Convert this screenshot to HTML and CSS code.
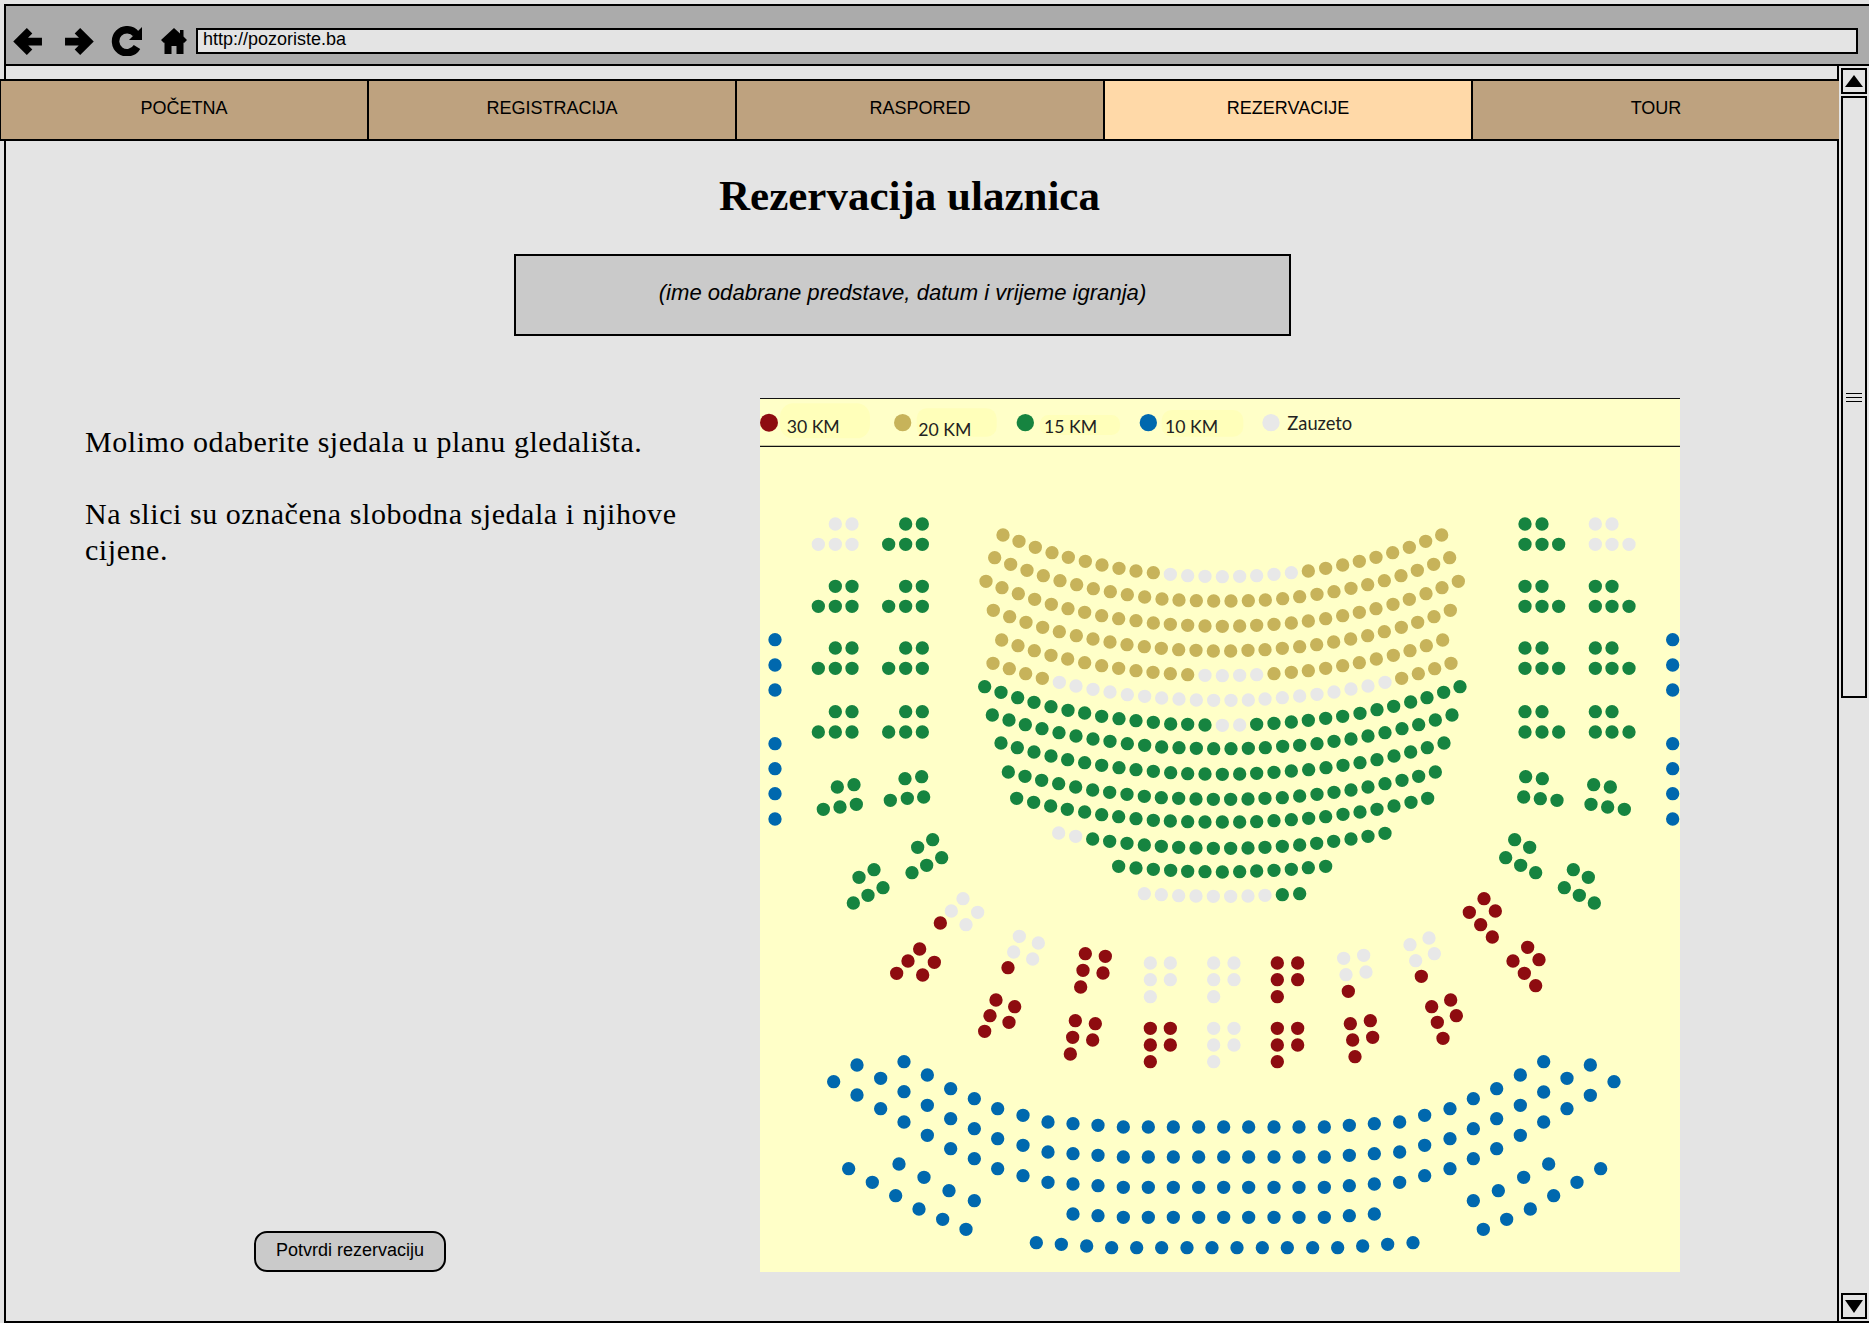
FILE: index.html
```html
<!DOCTYPE html>
<html lang="bs">
<head>
    <meta charset="UTF-8">
    <meta name="viewport" content="width=device-width, initial-scale=1.0">
    <title>Rezervacija ulaznica</title>
    <link rel="stylesheet" href="styles.css">
</head>
<body>
    <div class="window">
        <div class="toolbar">
            <svg class="tool-icon icon-back" viewBox="0 0 30 30"><path d="M29 15H7M17 4.500 6.500 15 17 25.500"/></svg>
            <svg class="tool-icon icon-forward" viewBox="0 0 30 30"><path d="M1 15H23M13 4.500 23.500 15 13 25.500"/></svg>
            <svg class="tool-icon icon-reload" viewBox="0 0 32 30"><path d="M26 21A11.500 11.500 0 1 1 25 8"/><polygon class="solid" points="31,1 31,14 18,14"/></svg>
            <svg class="tool-icon icon-home" viewBox="0 0 26 26"><polygon class="solid" points="13,0 19,5.500 19,2 22.500,2 22.500,8.500 26,12 23,15 22.500,14.500 22.500,26 15.500,26 15.500,18 10.500,18 10.500,26 3.500,26 3.500,14.500 3,15 0,12"/></svg>
            <div class="address">http://pozoriste.ba</div>
        </div>

        <div class="viewport">
            <div class="page">
                <div class="nav">
                    <div class="nav-item">POČETNA</div>
                    <div class="nav-item">REGISTRACIJA</div>
                    <div class="nav-item">RASPORED</div>
                    <div class="nav-item active">REZERVACIJE</div>
                    <div class="nav-item">TOUR</div>
                </div>

                <h1>Rezervacija ulaznica</h1>
                <div class="show-box">(ime odabrane predstave, datum i vrijeme igranja)</div>

                <div class="booking">
                    <div class="intro">
                        <div class="intro-text">
                            <p>Molimo odaberite sjedala u planu gledališta.</p>
                            <p>Na slici su označena slobodna sjedala i njihove cijene.</p>
                        </div>
                        <button class="confirm">Potvrdi rezervaciju</button>
                    </div>

                    <svg class="seat-map" viewBox="30 24 2760 2622">
                        <g class="legend">
                            <rect class="patch" x="90" y="40" width="270" height="105" rx="40"/>
                            <rect class="patch" x="500" y="55" width="240" height="85" rx="30"/>
                            <rect class="patch" x="870" y="75" width="240" height="60" rx="25"/>
                            <rect class="patch" x="1235" y="60" width="245" height="80" rx="30"/>
                            <line x1="30" y1="25" x2="2790" y2="25"/>
                            <line x1="30" y1="169" x2="2790" y2="169"/>
                            <circle class="dot-red" cx="57" cy="98" r="27"/>
                            <circle class="dot-gold" cx="458" cy="98" r="26"/>
                            <circle class="dot-green" cx="826" cy="98" r="26"/>
                            <circle class="dot-blue" cx="1195" cy="98" r="26"/>
                            <circle class="dot-taken" cx="1563" cy="98" r="26"/>
                            <text x="110" y="130">30 KM</text>
                            <text x="505" y="137">20 KM</text>
                            <text x="882" y="128">15 KM</text>
                            <text x="1245" y="130">10 KM</text>
                            <text class="taken-label" x="1612" y="120">Zauzeto</text>
                        </g>

                        <path class="seats gold" d="
                            M759 435h0M807 454h0M856 472h0M906 488h0M955 502h0M1006 514h0M1056 525h0M1107 535h0M1158 543h0M1210 548h0
                            M1675 543h0M1727 535h0M1778 525h0M1828 514h0M1878 502h0M1928 488h0M1978 472h0M2027 454h0M2075 435h0
                            M734 503h0M782 523h0M831 541h0M880 557h0M930 572h0M980 584h0M1030 596h0M1081 605h0M1132 614h0M1184 621h0M1236 627h0M1287 630h0M1339 632h0M1391 633h0M1443 633h0M1495 632h0M1546 630h0M1598 626h0M1649 620h0M1701 613h0M1752 605h0M1803 595h0M1853 584h0M1903 572h0M1953 557h0M2002 541h0M2051 523h0M2099 503h0
                            M708 574h0M756 593h0M805 611h0M854 628h0M904 643h0M954 656h0M1004 667h0M1055 677h0M1106 686h0M1158 692h0M1210 699h0M1261 703h0M1313 706h0M1365 708h0M1417 709h0M1469 708h0M1520 706h0M1572 703h0M1624 699h0M1675 693h0M1727 686h0M1778 677h0M1828 667h0M1878 656h0M1929 643h0M1978 628h0M2028 611h0M2076 593h0M2125 574h0
                            M730 661h0M779 680h0M828 697h0M878 712h0M928 725h0M979 737h0M1029 747h0M1080 756h0M1131 764h0M1183 770h0M1234 775h0M1286 779h0M1338 781h0M1390 783h0M1442 783h0M1494 781h0M1545 779h0M1597 775h0M1649 770h0M1700 764h0M1751 756h0M1802 747h0M1853 737h0M1903 725h0M1954 712h0M2003 697h0M2052 680h0M2101 661h0
                            M755 750h0M804 767h0M853 782h0M903 796h0M953 807h0M1004 818h0M1055 827h0M1106 835h0M1158 842h0M1209 847h0M1261 851h0M1313 854h0
                            M1572 851h0M1624 847h0M1675 842h0M1727 835h0M1778 827h0M1828 818h0M1879 807h0M1930 796h0M1980 782h0M2029 767h0M2078 750h0
                            M729 820h0M778 836h0M827 851h0M877 865h0M1955 865h0M2005 851h0M2054 836h0M2103 820h0"/>

                        <path class="seats green" d="
                            M704 890h0M753 907h0M803 923h0M852 937h0M903 950h0M954 961h0M1004 969h0M1055 979h0M1107 986h0M1158 992h0M1210 997h0M1262 1002h0M1313 1003h0M1365 1005h0
                            M1520 1003h0M1572 1000h0M1624 996h0M1675 991h0M1727 985h0M1778 979h0M1830 970h0M1881 959h0M1931 949h0M1982 936h0M2031 923h0M2081 907h0M2130 890h0
                            M727 975h0M777 990h0M826 1004h0M876 1016h0M927 1028h0M978 1038h0M1029 1047h0M1080 1054h0M1132 1061h0M1184 1066h0M1235 1071h0M1287 1073h0M1339 1075h0M1391 1076h0M1443 1076h0M1495 1075h0M1546 1073h0M1598 1069h0M1649 1066h0M1701 1061h0M1752 1054h0M1803 1047h0M1854 1038h0M1905 1028h0M1956 1016h0M2006 1004h0M2056 990h0M2106 975h0
                            M753 1059h0M802 1073h0M852 1086h0M903 1098h0M953 1109h0M1004 1118h0M1055 1126h0M1107 1133h0M1158 1139h0M1210 1144h0M1262 1148h0M1313 1151h0M1365 1152h0M1417 1153h0M1469 1152h0M1520 1150h0M1572 1147h0M1624 1143h0M1676 1139h0M1728 1133h0M1779 1126h0M1830 1118h0M1881 1109h0M1932 1098h0M1982 1086h0M2032 1073h0M2082 1059h0
                            M775 1146h0M825 1159h0M875 1171h0M926 1181h0M977 1191h0M1028 1200h0M1079 1207h0M1131 1213h0M1183 1219h0M1234 1223h0M1286 1225h0M1338 1227h0M1390 1228h0M1442 1228h0M1494 1227h0M1545 1225h0M1597 1223h0M1649 1218h0M1701 1213h0M1752 1207h0M1803 1200h0M1854 1191h0M1905 1181h0M1956 1171h0M2006 1159h0M2056 1146h0
                            M800 1225h0M851 1237h0M902 1248h0M952 1258h0M1004 1266h0M1055 1274h0M1106 1280h0M1158 1286h0M1210 1291h0M1261 1293h0M1313 1295h0M1365 1296h0M1417 1296h0M1469 1296h0M1520 1295h0M1572 1292h0M1624 1289h0M1676 1285h0M1727 1280h0M1779 1273h0M1830 1266h0M1881 1258h0M1932 1248h0M1983 1237h0M2033 1225h0
                            M1028 1347h0M1079 1354h0M1131 1360h0M1183 1365h0M1234 1369h0M1286 1372h0M1338 1374h0M1390 1375h0M1442 1375h0M1494 1374h0M1545 1372h0M1597 1369h0M1649 1365h0M1700 1360h0M1751 1354h0M1803 1347h0M1854 1339h0M1905 1330h0
                            M1106 1429h0M1158 1434h0M1210 1438h0M1262 1441h0M1313 1444h0M1365 1445h0M1417 1446h0M1469 1445h0M1520 1443h0M1572 1441h0M1624 1438h0M1675 1433h0M1727 1429h0
                            M1597 1514h0M1649 1511h0
                            M467 402h0M517 402h0M416 463h0M467 463h0M517 463h0
                            M256 589h0M306 589h0M205 649h0M256 649h0M306 649h0M467 589h0M517 589h0M416 649h0M467 649h0M517 649h0
                            M256 774h0M306 774h0M205 835h0M256 835h0M306 835h0M467 774h0M517 774h0M416 835h0M467 835h0M517 835h0
                            M256 965h0M306 965h0M205 1026h0M256 1026h0M306 1026h0M467 965h0M517 965h0M416 1026h0M467 1026h0M517 1026h0
                            M262 1191h0M312 1184h0M220 1258h0M270 1251h0M319 1243h0M465 1166h0M515 1160h0M421 1231h0M472 1225h0M521 1221h0
                            M2325 402h0M2376 402h0M2325 463h0M2376 463h0M2426 463h0
                            M2325 589h0M2376 589h0M2325 649h0M2376 649h0M2426 649h0M2536 589h0M2586 589h0M2536 649h0M2586 649h0M2637 649h0
                            M2325 774h0M2376 774h0M2325 835h0M2376 835h0M2426 835h0M2536 774h0M2586 774h0M2536 835h0M2586 835h0M2637 835h0
                            M2325 965h0M2376 965h0M2325 1026h0M2376 1026h0M2426 1026h0M2536 965h0M2586 965h0M2536 1026h0M2586 1026h0M2637 1026h0
                            M2327 1160h0M2377 1166h0M2321 1221h0M2371 1226h0M2421 1231h0M2531 1184h0M2581 1191h0M2523 1243h0M2573 1251h0M2623 1258h0
                            M548 1349h0M503 1372h0M575 1403h0M530 1426h0M486 1448h0M372 1439h0M327 1462h0M399 1493h0M354 1516h0M310 1539h0
                            M2294 1349h0M2339 1372h0M2267 1403h0M2312 1426h0M2357 1448h0M2470 1439h0M2515 1462h0M2443 1493h0M2488 1516h0M2533 1539h0"/>

                        <path class="seats taken" d="
                            M1261 553h0M1313 557h0M1365 559h0M1417 560h0M1469 559h0M1520 557h0M1572 553h0M1624 548h0
                            M1365 856h0M1417 857h0M1469 856h0M1520 854h0
                            M928 877h0M978 888h0M1029 898h0M1080 906h0M1132 914h0M1184 919h0M1235 924h0M1287 927h0M1339 930h0M1391 931h0M1443 931h0M1495 930h0M1545 927h0M1597 923h0M1649 918h0M1701 913h0M1752 906h0M1803 897h0M1854 888h0M1905 877h0
                            M1417 1006h0M1469 1005h0
                            M926 1329h0M977 1339h0
                            M1183 1511h0M1234 1514h0M1286 1517h0M1338 1518h0M1390 1519h0M1442 1519h0M1494 1518h0M1545 1516h0
                            M256 402h0M306 402h0M205 463h0M256 463h0M306 463h0
                            M2536 402h0M2586 402h0M2536 463h0M2586 463h0M2637 463h0
                            M639 1526h0M604 1563h0M683 1567h0M648 1604h0
                            M808 1639h0M865 1659h0M791 1686h0M848 1707h0
                            M1201 1719h0M1261 1719h0M1201 1769h0M1261 1769h0M1201 1820h0
                            M1391 1719h0M1452 1719h0M1391 1769h0M1452 1769h0M1391 1820h0
                            M1391 1915h0M1452 1915h0M1391 1965h0M1452 1965h0M1391 2015h0
                            M1781 1705h0M1841 1696h0M1788 1754h0M1848 1746h0
                            M1980 1664h0M2037 1644h0M1997 1712h0M2053 1691h0"/>

                        <path class="seats red" d="
                            M571 1599h0
                            M509 1677h0M474 1713h0M553 1717h0M518 1755h0M440 1750h0
                            M774 1733h0
                            M738 1830h0M794 1850h0M720 1877h0M777 1897h0M704 1924h0
                            M1006 1691h0M1066 1699h0M999 1741h0M1059 1749h0M992 1791h0
                            M976 1892h0M1036 1901h0M968 1942h0M1028 1950h0M961 1992h0
                            M1201 1915h0M1261 1915h0M1201 1965h0M1261 1965h0M1201 2015h0
                            M1582 1719h0M1643 1719h0M1582 1769h0M1643 1769h0M1582 1820h0
                            M1582 1915h0M1643 1915h0M1582 1965h0M1643 1965h0M1582 2015h0
                            M1795 1804h0
                            M1801 1901h0M1861 1892h0M1808 1950h0M1868 1942h0M1815 2000h0
                            M2014 1759h0
                            M2102 1830h0M2045 1850h0M2119 1877h0M2062 1897h0M2079 1945h0
                            M2202 1526h0M2158 1567h0M2236 1563h0M2192 1604h0M2227 1641h0
                            M2333 1672h0M2289 1713h0M2367 1709h0M2323 1750h0M2357 1787h0"/>

                        <path class="seats blue" d="
                            M75 749h0M75 825h0M75 900h0M75 1061h0M75 1136h0M75 1211h0M75 1287h0
                            M2768 749h0M2768 825h0M2768 900h0M2768 1061h0M2768 1136h0M2768 1211h0M2768 1287h0
                            M251 2075h0M321 2025h0M392 2065h0M462 2015h0M532 2055h0M602 2096h0M673 2126h0M743 2156h0M819 2176h0
                            M321 2115h0M392 2156h0M462 2105h0M462 2196h0M532 2146h0M532 2236h0M602 2186h0M602 2276h0M673 2216h0M673 2306h0M743 2246h0M743 2336h0M819 2266h0M819 2357h0
                            M894 2196h0M969 2201h0M1044 2206h0M1120 2211h0M1195 2211h0M1270 2211h0M1346 2211h0M1421 2211h0M1496 2211h0M1572 2211h0M1647 2211h0M1723 2211h0M1798 2206h0M1873 2201h0M1949 2196h0
                            M894 2286h0M969 2291h0M1044 2296h0M1120 2301h0M1195 2301h0M1270 2301h0M1346 2301h0M1421 2301h0M1496 2301h0M1572 2301h0M1647 2301h0M1723 2301h0M1798 2296h0M1873 2291h0M1949 2286h0
                            M894 2377h0M969 2382h0M1044 2387h0M1120 2392h0M1195 2392h0M1270 2392h0M1346 2392h0M1421 2392h0M1496 2392h0M1572 2392h0M1647 2392h0M1723 2392h0M1798 2387h0M1873 2382h0M1949 2377h0
                            M969 2472h0M1044 2477h0M1120 2482h0M1195 2482h0M1270 2482h0M1346 2482h0M1421 2482h0M1496 2482h0M1572 2482h0M1647 2482h0M1723 2482h0M1798 2477h0M1873 2472h0
                            M859 2558h0M934 2563h0M1010 2568h0M1085 2573h0M1160 2573h0M1235 2573h0M1311 2573h0M1386 2573h0M1461 2573h0M1537 2573h0M1612 2573h0M1688 2573h0M1763 2573h0M1838 2568h0M1913 2563h0M1989 2558h0
                            M296 2336h0M367 2377h0M437 2417h0M507 2457h0M578 2488h0M648 2518h0M447 2322h0M522 2362h0M597 2402h0M673 2432h0
                            M2024 2176h0M2100 2156h0M2170 2126h0M2240 2096h0M2311 2055h0M2381 2015h0M2451 2065h0M2521 2025h0M2592 2075h0
                            M2381 2106h0M2451 2156h0M2521 2116h0M2311 2146h0M2311 2236h0M2381 2196h0M2240 2186h0M2240 2276h0M2170 2216h0M2170 2306h0M2100 2246h0M2100 2336h0M2024 2266h0M2024 2357h0
                            M2170 2432h0M2245 2402h0M2321 2362h0M2396 2322h0M2200 2518h0M2270 2488h0M2341 2457h0M2411 2417h0M2481 2377h0M2552 2336h0"/>
                    </svg>
                </div>
            </div>

            <div class="scrollbar">
                <div class="scroll-btn"><span class="arrow-up"></span></div>
                <div class="scroll-thumb"><span class="grip"></span></div>
                <div class="scroll-btn scroll-down"><span class="arrow-down"></span></div>
            </div>
        </div>
    </div>
</body>
</html>
```

FILE: styles.css
```css
* {
    box-sizing: border-box;
    margin: 0;
    padding: 0;
}

html, body {
    height: 1323px;
    overflow: hidden;
}

body {
    padding: 4px 0 0 4px;
    background-color: #e4e4e4;
    color: #000;
    font-family: "Liberation Sans", Arial, sans-serif;
}

.window {
    display: flex;
    flex-direction: column;
    height: 1319px;
    border-top: 2px solid #000;
    border-left: 2px solid #000;
    border-bottom: 2px solid #000;
}

/* browser toolbar */
.toolbar {
    display: flex;
    align-items: center;
    flex: none;
    height: 60px;
    padding: 12px 11px 0 6px;
    background: #ababab;
    border-bottom: 2px solid #000;
}

.tool-icon {
    flex: none;
    fill: none;
    stroke: #000;
    stroke-width: 7.5;
}

.tool-icon .solid {
    fill: #000;
    stroke: none;
}

.icon-back {
    width: 31px;
    height: 31px;
}

.icon-forward {
    width: 31px;
    height: 31px;
    margin-left: 21px;
}

.icon-reload {
    width: 32px;
    height: 30px;
    margin-left: 16px;
}

.icon-home {
    width: 26px;
    height: 26px;
    margin-left: 18px;
}

.address {
    flex: 1;
    height: 26px;
    margin-left: 9px;
    padding: 0 5px;
    background: #e4e4e4;
    border: 2px solid #000;
    font-size: 18px;
    line-height: 18px;
}

/* page area */
.viewport {
    display: flex;
    flex: 1;
    min-height: 0;
}

.page {
    flex: 1;
    min-width: 0;
    border-right: 2px solid #000;
}

.nav {
    display: flex;
    height: 62px;
    margin: 13px -2px 0 -6px;
    border-top: 2px solid #000;
    border-bottom: 2px solid #000;
    border-left: 1px solid #000;
}

.nav-item {
    flex: 1;
    display: flex;
    align-items: center;
    justify-content: center;
    padding-bottom: 3px;
    background: #bea27f;
    border-right: 2px solid #000;
    font-size: 18px;
}

.nav-item.active {
    background: #ffd9a8;
}

.nav-item:last-child {
    border-right: none;
}

h1 {
    margin-top: 32px;
    padding-right: 24px;
    font-family: "Liberation Serif", "Times New Roman", serif;
    font-size: 43px;
    line-height: 46px;
    text-align: center;
}

.show-box {
    width: 777px;
    height: 82px;
    margin: 35px 0 0 508px;
    padding-top: 24px;
    background: #cacaca;
    border: 2px solid #000;
    font-size: 22.100px;
    font-style: italic;
    text-align: center;
}

.booking {
    display: flex;
    margin-top: 62px;
}

.intro {
    display: flex;
    flex-direction: column;
    justify-content: space-between;
    width: 754px;
    padding: 26px 0 0 79px;
}

.intro-text {
    max-width: 600px;
    font-family: "Liberation Serif", "Times New Roman", serif;
    font-size: 30px;
    line-height: 36px;
    letter-spacing: 0.55px;
}

.intro-text p {
    margin-bottom: 36px;
}

.confirm {
    align-self: flex-start;
    width: 192px;
    height: 41px;
    margin-left: 169px;
    padding-bottom: 2px;
    background: #cacaca;
    border: 2px solid #000;
    border-radius: 13px;
    font-family: inherit;
    font-size: 18px;
}

/* seat plan */
.seat-map {
    display: block;
    flex: none;
    width: 920px;
    height: 874px;
    background: #ffffc8;
}

.legend line {
    stroke: #111;
    stroke-width: 3.500;
}

.legend text {
    font-family: Lato, "Noto Sans", sans-serif;
    font-size: 53px;
    fill: #222;
}

.legend .taken-label {
    font-size: 55px;
}

.patch {
    fill: #ffffba;
}

.dot-red { fill: #8e0c10; }
.dot-gold { fill: #c7b35a; }
.dot-green { fill: #168440; }
.dot-blue { fill: #0068ae; }
.dot-taken { fill: #e8e8e8; }

.seats {
    fill: none;
    stroke-width: 40;
    stroke-linecap: round;
}

.seats.red { stroke: #8e0c10; }
.seats.gold { stroke: #c7b35a; }
.seats.green { stroke: #168440; }
.seats.blue { stroke: #0068ae; }
.seats.taken { stroke: #e8e8e8; }

/* scrollbar */
.scrollbar {
    display: flex;
    flex-direction: column;
    flex: none;
    width: 30px;
    padding: 2px 2px 0;
}

.scroll-btn {
    display: flex;
    align-items: center;
    justify-content: center;
    flex: none;
    height: 26px;
    border: 2px solid #000;
}

.scroll-thumb {
    display: flex;
    align-items: center;
    justify-content: center;
    flex: none;
    height: 602px;
    margin-top: 2px;
    border: 2px solid #000;
}

.scroll-down {
    margin-top: auto;
    margin-bottom: 2px;
}

.arrow-up {
    border-left: 9px solid transparent;
    border-right: 9px solid transparent;
    border-bottom: 12px solid #000;
}

.arrow-down {
    border-left: 9px solid transparent;
    border-right: 9px solid transparent;
    border-top: 13px solid #000;
}

.grip {
    width: 16px;
    height: 9px;
    background: repeating-linear-gradient(#000 0 1px, transparent 1px 4px);
}
```
